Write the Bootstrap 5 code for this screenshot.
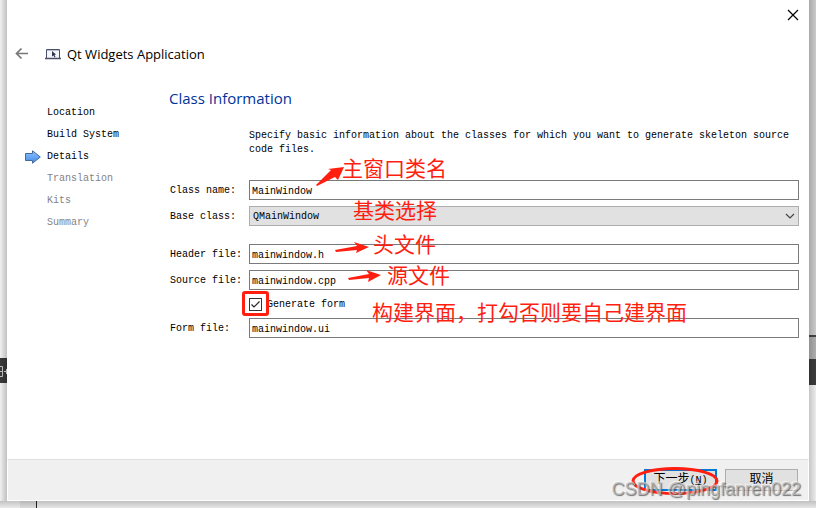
<!DOCTYPE html>
<html lang="zh-CN">
<head>
<meta charset="utf-8">
<meta name="viewport" content="width=device-width, initial-scale=1">
<title>Qt Widgets Application</title>
<link rel="stylesheet" href="https://cdn.jsdelivr.net/npm/bootstrap@5.3.0/dist/css/bootstrap.min.css">
<style>
body{font:10px/14px "Liberation Mono","Noto Sans CJK SC",monospace;color:#000;background:#e9e9e9}
.strip{width:7px;flex:none}
.strip-left{background:linear-gradient(90deg,transparent,rgba(0,0,0,.2)),linear-gradient(#f0f0f0 358px,#3a3a3a 358px,#3a3a3a 383px,#f0f0f0 383px)}
.strip-right{background:linear-gradient(90deg,rgba(0,0,0,.16),transparent),linear-gradient(#cacaca 335px,#444 335px,#444 337px,#adadad 337px,#adadad 359px,#3b3b3b 359px,#3b3b3b 385px,#ececec 385px)}
.strip-bottom{height:7px;background:linear-gradient(rgba(0,0,0,.2),rgba(0,0,0,.04)),linear-gradient(90deg,#f4f4f4 20px,#e4e4e4 20px,#e4e4e4 36px,#222 36px,#222 37px,#f0f0f0 37px)}
.wizard{min-width:0}
.topbar{height:88px;padding:0 10px 0 8px}
.close-x{width:12px;height:12px;margin-top:9px}
.back{width:14px;height:14px}
.app-title{font:13px/18px "Open Sans","Noto Sans",sans-serif}
.titlebox{padding-top:45px}
.app-icon{margin:0 6px 0 16px}
.plain{border:0;background:none;padding:0;display:block;line-height:0}
.steps{width:162px;padding:14px 0 0 18px}
.steps li{height:22px;color:#000}
.steps .todo{color:#838383}
.marker{width:22px}
.page-body{padding-right:10px}
.page-title{font:15px/20px "Open Sans","Noto Sans",sans-serif;color:#003399}
.desc{margin:21px 0 23px 80px}
.field{height:20px;margin-bottom:6px}
.field label.name{width:80px;padding:2px 0 0 1px}
.field .form-control,.field .form-select{height:20px;min-height:0;border:1px solid #7a7a7a;border-radius:0;padding:2px 2px 0;font:inherit;line-height:16px;color:#000;background-color:#fff}
.field .form-select{background:#e1e1e1;border-color:#adadad;padding-left:3px}
.group{margin-bottom:18px}
.check-row{height:20px;margin:-2px 0 4px 80px}
.check-row label{padding:2px 0 0 5px}
.check-row .form-check-input{width:13px;height:13px;margin:0;border:1px solid #333;border-radius:0;background:#fff;flex:none}
.chev{right:4px;top:7px}
.tick{left:1px;top:1px}
.foot{height:42px;border:1px solid #fff;border-top-color:#dfdfdf;background:#f0f0f0;padding:0 10px;gap:8px}
.foot .btn{width:73px;height:22px;padding:0;border:1px solid #adadad;border-radius:0;background:#e1e1e1;font:10px/18px "Liberation Mono","Noto Sans CJK SC",monospace;color:#000}
.foot .btn-next{border:2px solid #0078d7}
.cn{font-size:12px}
.notes{inset:0;pointer-events:none}
.note{font:21px/24px "Noto Sans CJK SC",sans-serif;color:#ff1e10;white-space:nowrap}
.n1{left:342px;top:155px}.n2{left:353px;top:197px}.n3{left:373px;top:231px}.n4{left:387px;top:262px}.n5{left:372px;top:299px}
.credit{right:15px;bottom:8px;font:18px/22px "Liberation Sans",sans-serif;color:rgba(185,185,185,.75);text-shadow:1px 1px 1px rgba(80,80,80,.8),-1px -1px 1px rgba(255,255,255,.6);white-space:nowrap}
</style>
</head>
<body class="m-0">
<div class="position-relative d-flex flex-column min-vh-100">
  <div class="d-flex flex-grow-1">
    <div class="strip strip-left position-relative">
      <svg class="position-absolute top-0 start-0" width="7" height="400" fill="none" stroke="#bbb"><path d="M0 366.500H2.500V376.500H0M0 371.500H2.500M4 371.500H7M6.500 369V374"/></svg>
    </div>
    <main class="wizard d-flex flex-column flex-grow-1 bg-white">
      <header class="topbar d-flex justify-content-between align-items-start">
        <div class="titlebox d-flex align-items-center">
          <button class="plain" type="button" aria-label="Back"><svg class="back" viewBox="0 0 14 14" fill="none" stroke="#777" stroke-width="1.700"><path d="M13 6.500H2M6.500 1.500L1.500 6.500L6.500 11.500"/></svg></button>
          <svg class="app-icon" width="16" height="12" viewBox="0 0 16 12"><path d="M1.500 10V1.500H14.500V10" fill="#f4f5fa" stroke="#4a5068"/><path d="M0 10.500H16" stroke="#4a5068" stroke-width="1.500"/><path d="M2 2.500H14" stroke="#b9bdd0"/><path d="M7 3L11 6.500L9.500 7L10.500 9L9.500 9.500L8.500 7.500L7 8.500Z" fill="#303750"/></svg>
          <span class="app-title">Qt Widgets Application</span>
        </div>
        <button class="plain close-x" type="button" aria-label="Close"><svg width="12" height="12" fill="none" stroke="#000" stroke-width="1.200"><path d="M1 1L11 11M11 1L1 11"/></svg></button>
      </header>
      <div class="d-flex flex-grow-1">
        <nav class="steps flex-shrink-0">
          <ol class="list-unstyled m-0">
            <li class="d-flex align-items-center"><span class="marker"></span>Location</li>
            <li class="d-flex align-items-center"><span class="marker"></span>Build System</li>
            <li class="d-flex align-items-center" aria-current="step"><span class="marker d-flex"><svg width="16" height="14" viewBox="0 0 16 14"><defs><linearGradient id="blue" x2="0" y2="1"><stop stop-color="#8fc5ff"/><stop offset="1" stop-color="#4389e8"/></linearGradient></defs><path d="M.5 3.500H7.500V.8L15.300 7L7.500 13.200V10.500H.5Z" fill="url(#blue)" stroke="#426a9c"/></svg></span>Details</li>
            <li class="todo d-flex align-items-center"><span class="marker"></span>Translation</li>
            <li class="todo d-flex align-items-center"><span class="marker"></span>Kits</li>
            <li class="todo d-flex align-items-center"><span class="marker"></span>Summary</li>
          </ol>
        </nav>
        <form class="page-body flex-grow-1">
          <h1 class="page-title m-0">Class Information</h1>
          <p class="desc">Specify basic information about the classes for which you want to generate skeleton source code files.</p>
          <div class="field d-flex align-items-center"><label class="name flex-shrink-0" for="cls">Class name:</label><input class="form-control" id="cls" value="MainWindow"></div>
          <div class="field group d-flex align-items-center"><label class="name flex-shrink-0" for="base">Base class:</label>
            <div class="position-relative flex-grow-1"><select class="form-select" id="base"><option>QMainWindow</option></select><svg class="chev position-absolute" width="10" height="7" fill="none" stroke="#444" stroke-width="1.200"><path d="M1 1L5 5L9 1"/></svg></div></div>
          <div class="field d-flex align-items-center"><label class="name flex-shrink-0" for="hdr">Header file:</label><input class="form-control" id="hdr" value="mainwindow.h"></div>
          <div class="field d-flex align-items-center"><label class="name flex-shrink-0" for="src">Source file:</label><input class="form-control" id="src" value="mainwindow.cpp"></div>
          <div class="check-row d-flex align-items-center"><span class="position-relative d-flex"><input class="form-check-input" type="checkbox" id="gen" checked><svg class="tick position-absolute" width="11" height="11" fill="none" stroke="#222" stroke-width="1.200"><path d="M1.500 5.500L4 8L9.500 2.500"/></svg></span><label for="gen">Generate form</label></div>
          <div class="field d-flex align-items-center"><label class="name flex-shrink-0" for="ui">Form file:</label><input class="form-control" id="ui" value="mainwindow.ui"></div>
        </form>
      </div>
      <footer class="foot d-flex justify-content-end align-items-center">
        <button class="btn btn-next" type="button"><span class="cn">下一步</span>(<u>N</u>)</button>
        <button class="btn" type="button"><span class="cn">取消</span></button>
      </footer>
    </main>
    <div class="strip strip-right"></div>
  </div>
  <div class="strip-bottom"></div>
  <div class="notes position-absolute overflow-hidden">
    <svg class="position-absolute top-0 start-0" width="480" height="330" fill="#ff1e10">
      <path d="M316 185L331 170L328 169L344 167L338 180L335 177L317 186Z"/>
      <path d="M335 250L357 246L354 242L369 247L356 253L357 250L336 252Z"/>
      <path d="M348 278L369 274L366 270L381 275L368 282L369 278L349 280Z"/>
      <rect x="243.500" y="292.500" width="24" height="22" rx="1.500" fill="none" stroke="#ff1e10" stroke-width="3"/>
    </svg>
    <span class="note n1 position-absolute">主窗口类名</span>
    <span class="note n2 position-absolute">基类选择</span>
    <span class="note n3 position-absolute">头文件</span>
    <span class="note n4 position-absolute">源文件</span>
    <span class="note n5 position-absolute">构建界面，打勾否则要自己建界面</span>
    <svg class="position-absolute bottom-0 end-0" width="190" height="48" fill="none" stroke="#ff1e10" stroke-width="3"><ellipse cx="49" cy="21" rx="42" ry="12.500"/></svg>
    <span class="credit position-absolute">CSDN @pingfanren022</span>
  </div>
</div>
<script src="https://cdn.jsdelivr.net/npm/bootstrap@5.3.0/dist/js/bootstrap.bundle.min.js"></script>
</body>
</html>
